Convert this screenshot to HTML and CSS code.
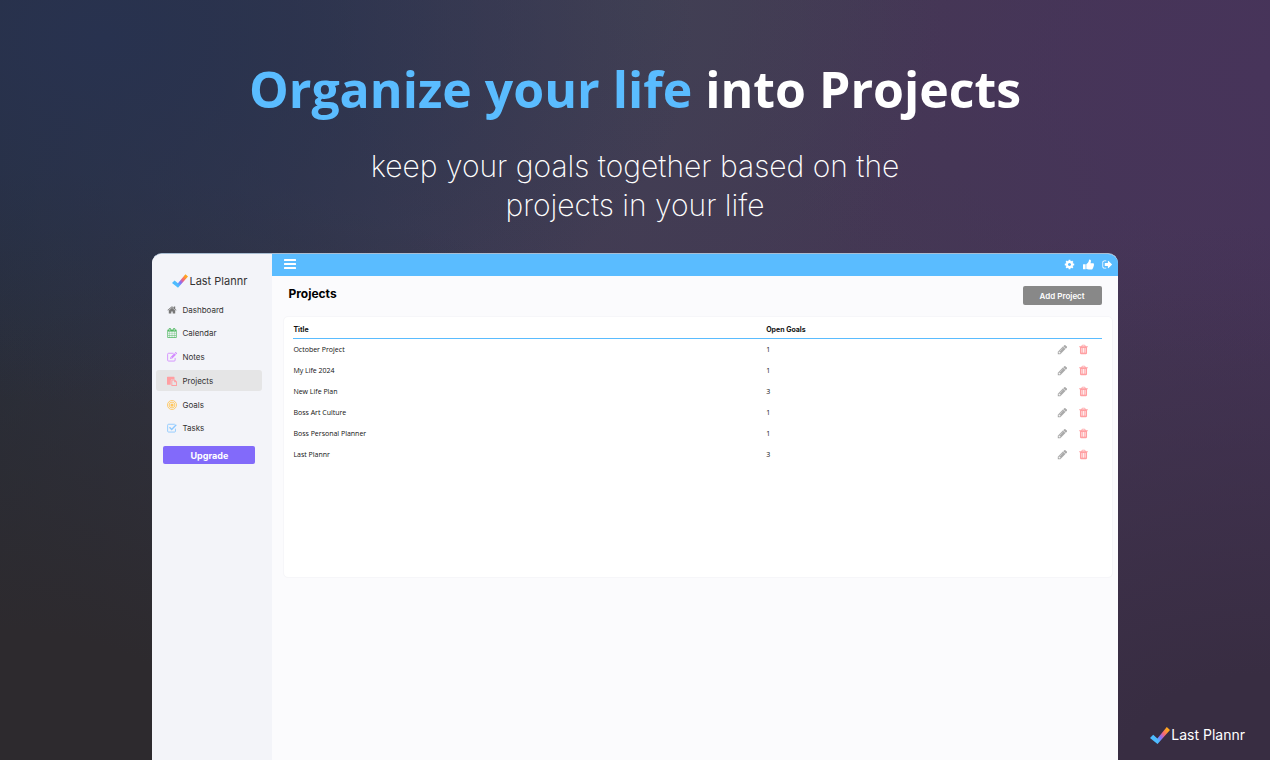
FILE: index.html
```html
<!DOCTYPE html>
<html lang="en">
<head>
    <meta charset="UTF-8">
    <title>Last Plannr</title>
    <link rel="stylesheet" href="styles.css">
</head>
<body>
    <!-- shared icons -->
    <svg class="sprite" aria-hidden="true">
        <defs>
            <linearGradient id="checkFill" gradientUnits="userSpaceOnUse" x1="3" y1="12" x2="18" y2="1">
                <stop offset="0.15" stop-color="#4dbcff"/>
                <stop offset="0.4" stop-color="#8b6cf5"/>
                <stop offset="0.62" stop-color="#f5657c"/>
                <stop offset="0.9" stop-color="#ffa51f"/>
            </linearGradient>
        </defs>
        <symbol id="check" viewBox="0 0 20 17">
            <path d="M0 11l3.200-3.200 4.200 3.600L16.800 0 20 2.900 7.500 17z" fill="url(#checkFill)"/>
        </symbol>
        <symbol id="home" viewBox="0 0 1792 1792">
            <path d="M1472 992v480q0 26-19 45t-45 19h-384v-384h-256v384h-384q-26 0-45-19t-19-45v-480q0-1 .5-3t.5-3l575-474 575 474q1 2 1 6zm223-69l-62 74q-8 9-21 11h-3q-13 0-21-7l-692-577-692 577q-12 8-24 7-13-2-21-11l-62-74q-8-10-7-23.500t11-21.500l719-599q32-26 76-26t76 26l244 204v-195q0-14 9-23t23-9h192q14 0 23 9t9 23v408l219 182q10 8 11 21.500t-7 23.500z"/>
        </symbol>
        <symbol id="calendar" viewBox="0 0 1792 1792">
            <path fill-rule="evenodd" d="M192 1664h288v-288h-288v288zm352 0h320v-288h-320v288zm-352-352h288v-320h-288v320zm352 0h320v-320h-320v320zm-352-384h288v-288h-288v288zm736 736h320v-288h-320v288zm-384-736h320v-288h-320v288zm768 736h288v-288h-288v288zm-384-352h320v-320h-320v320zm-352-864v-288q0-13-9.500-22.500t-22.500-9.500h-64q-13 0-22.500 9.500t-9.500 22.500v288q0 13 9.500 22.500t22.500 9.500h64q13 0 22.500-9.500t9.500-22.500zm736 864h288v-320h-288v320zm-384-384h320v-288h-320v288zm384 0h288v-288h-288v288zm32-480v-288q0-13-9.500-22.500t-22.500-9.500h-64q-13 0-22.500 9.500t-9.500 22.500v288q0 13 9.500 22.500t22.500 9.500h64q13 0 22.500-9.500t9.500-22.500zm384-64v1280q0 52-38 90t-90 38h-1408q-52 0-90-38t-38-90v-1280q0-52 38-90t90-38h128v-96q0-66 47-113t113-47h64q66 0 113 47t47 113v96h384v-96q0-66 47-113t113-47h64q66 0 113 47t47 113v96h128q52 0 90 38t38 90z"/>
        </symbol>
        <symbol id="note" viewBox="0 0 16 16">
            <path d="M10.500 2H2.500A1.500 1.500 0 0 0 1 3.500v9.500A1.500 1.500 0 0 0 2.500 14.500h9a1.500 1.500 0 0 0 1.500-1.500V9.500" fill="none" stroke="currentColor" stroke-width="1.400"/>
            <path fill-rule="evenodd" d="M11.800 1.800l2.600 2.600-6.800 6.800H5V8.600zM6 8.900v1.400h1.300l.7-.7-1.400-1.400zM12.500 1.100l.6-.6a1 1 0 0 1 1.400 0l1.200 1.200a1 1 0 0 1 0 1.400l-.6.6z"/>
        </symbol>
        <symbol id="paste" viewBox="0 0 16 16">
            <path d="M1 1h10a1 1 0 0 1 1 1v3H8a2 2 0 0 0-2 2v7H1a1 1 0 0 1-1-1V2a1 1 0 0 1 1-1z"/>
            <path fill-rule="evenodd" d="M8 5.500h4.500L16 9v6a1 1 0 0 1-1 1H8a1 1 0 0 1-1-1V6.500a1 1 0 0 1 1-1zm.5 1.500v7.500h6V10h-3V7z"/>
        </symbol>
        <symbol id="target" viewBox="0 0 16 16">
            <g fill="none" stroke="currentColor" stroke-width="1.400">
                <circle cx="8" cy="8" r="7.200"/>
                <circle cx="8" cy="8" r="4.600"/>
            </g>
            <circle cx="8" cy="8" r="2.600"/>
        </symbol>
        <symbol id="task" viewBox="0 0 16 16">
            <path d="M12.500 2H2.500A1.500 1.500 0 0 0 1 3.500v9.500A1.500 1.500 0 0 0 2.500 14.500h9.500a1.500 1.500 0 0 0 1.500-1.500V9" fill="none" stroke="currentColor" stroke-width="1.400"/>
            <path d="M3.200 7.500l1.600-1.600 2.700 2.700L14 2.100l1.600 1.600-8.100 8.100z"/>
        </symbol>
        <symbol id="bars" viewBox="0 0 12 10">
            <rect width="12" height="2" rx="0.500"/>
            <rect y="4" width="12" height="2" rx="0.500"/>
            <rect y="8" width="12" height="2" rx="0.500"/>
        </symbol>
        <symbol id="cog" viewBox="0 0 1792 1792">
            <path d="M1152 896q0-106-75-181t-181-75-181 75-75 181 75 181 181 75 181-75 75-181zm512-109v222q0 12-8 23t-20 13l-185 28q-19 54-39 91 35 50 107 138 10 12 10 25t-9 23q-27 37-99 108t-94 71q-12 0-26-9l-138-108q-44 23-91 38-16 136-29 186-7 28-36 28h-222q-14 0-24.500-8.500t-11.500-21.500l-28-184q-49-16-90-37l-141 107q-10 9-25 9-14 0-25-11-126-114-165-168-7-10-7-23 0-12 8-23 15-21 51-66.500t54-70.500q-27-50-41-99l-183-27q-13-2-21-12.500t-8-23.500v-222q0-12 8-23t19-13l186-28q14-46 39-92-40-57-107-138-10-12-10-24 0-10 9-23 26-36 98.500-107.500t94.500-71.500q13 0 26 10l138 107q44-23 91-38 16-136 29-186 7-28 36-28h222q14 0 24.500 8.500t11.500 21.500l28 184q49 16 90 37l142-107q9-9 24-9 13 0 25 10 129 119 165 170 7 8 7 22 0 12-8 23-15 21-51 66.500t-54 70.500q26 50 41 98l183 28q13 2 21 12.500t8 23.500z"/>
        </symbol>
        <symbol id="thumb" viewBox="0 0 16 16">
            <path d="M.5 7.500h3.300V15H.5a.5.5 0 0 1-.5-.5V8a.5.5 0 0 1 .5-.5zM4.800 7.500C6.500 6.800 7.500 5 8.200 3.800 8.600 3 8.400.8 9.500.6c1.800-.2 2.400 1.600 2 3.200L11 6h3.500c1.800 0 2 1.800 1 2.600.7.900.4 1.900-.4 2.400.4 1-.1 1.800-.8 2.100.2 1.500-.8 2.300-2.300 2.300-3 0-4.200-.2-7.200-1z"/>
        </symbol>
        <symbol id="signout" viewBox="0 0 1792 1792">
            <path d="M704 1440q0 4 1 20t.5 26.500-3 23.500-10 19.500-20.500 6.500h-320q-119 0-203.500-84.500t-84.500-203.500v-704q0-119 84.500-203.500t203.500-84.500h320q13 0 22.500 9.500t9.500 22.500q0 4 1 20t.5 26.500-3 23.500-10 19.500-20.500 6.500h-320q-66 0-113 47t-47 113v704q0 66 47 113t113 47h312l11.500 1 11.500 3 8 5.500 7 9 2 13.500zm928-544q0 26-19 45l-544 544q-19 19-45 19t-45-19-19-45v-288h-448q-26 0-45-19t-19-45v-384q0-26 19-45t45-19h448v-288q0-26 19-45t45-19 45 19l544 544q19 19 19 45z"/>
        </symbol>
        <symbol id="pencil" viewBox="0 0 1792 1792">
            <path d="M491 1536l91-91-235-235-91 91v107h128v128h107zm523-928q0-22-22-22-10 0-17 7l-542 542q-7 7-7 17 0 22 22 22 10 0 17-7l542-542q7-7 7-17zm-54-192l416 416-832 832h-416v-416zm683 96q0 53-37 90l-166 166-416-416 166-165q36-38 90-38 53 0 91 38l235 234q37 39 37 91z"/>
        </symbol>
        <symbol id="trash" viewBox="0 0 1792 1792">
            <path fill-rule="evenodd" d="M704 1376v-704q0-14-9-23t-23-9h-64q-14 0-23 9t-9 23v704q0 14 9 23t23 9h64q14 0 23-9t9-23zm256 0v-704q0-14-9-23t-23-9h-64q-14 0-23 9t-9 23v704q0 14 9 23t23 9h64q14 0 23-9t9-23zm256 0v-704q0-14-9-23t-23-9h-64q-14 0-23 9t-9 23v704q0 14 9 23t23 9h64q14 0 23-9t9-23zm-544-992h448l-48-117q-7-9-17-11h-317q-10 2-17 11zm928 32v64q0 14-9 23t-23 9h-96v948q0 83-47 143.500t-113 60.500h-832q-66 0-113-58.500t-47-141.500v-952h-96q-14 0-23-9t-9-23v-64q0-14 9-23t23-9h309l70-167q15-37 54-63t79-26h320q40 0 79 26t54 63l70 167h309q14 0 23 9t9 23z"/>
        </symbol>
    </svg>

    <header class="hero">
        <h1><span>Organize your life</span> into Projects</h1>
        <p>keep your goals together based on the<br>projects in your life</p>
    </header>

    <div class="app">
        <!-- sidebar -->
        <aside class="sidebar">
            <div class="logo"><svg><use href="#check"/></svg>Last Plannr</div>
            <nav class="menu">
                <a href="#" class="home"><svg><use href="#home"/></svg>Dashboard</a>
                <a href="#" class="calendar"><svg><use href="#calendar"/></svg>Calendar</a>
                <a href="#" class="notes"><svg><use href="#note"/></svg>Notes</a>
                <a href="#" class="projects active"><svg><use href="#paste"/></svg>Projects</a>
                <a href="#" class="goals"><svg><use href="#target"/></svg>Goals</a>
                <a href="#" class="tasks"><svg><use href="#task"/></svg>Tasks</a>
            </nav>
            <button class="upgrade">Upgrade</button>
        </aside>

        <div class="content">
            <!-- top bar -->
            <div class="topbar">
                <button class="icon-btn toggle" aria-label="Menu"><svg><use href="#bars"/></svg></button>
                <button class="icon-btn" aria-label="Settings"><svg><use href="#cog"/></svg></button>
                <button class="icon-btn" aria-label="Feedback"><svg><use href="#thumb"/></svg></button>
                <button class="icon-btn" aria-label="Sign out"><svg><use href="#signout"/></svg></button>
            </div>

            <div class="page-head">
                <h2>Projects</h2>
                <button class="add">Add Project</button>
            </div>

            <div class="card">
                <table>
                    <thead>
                        <tr><th class="title">Title</th><th>Open Goals</th><th class="actions"></th></tr>
                    </thead>
                    <!-- rows are filled in by the script -->
                    <tbody id="projectRows"></tbody>
                </table>
            </div>
        </div>
    </div>

    <div class="logo watermark"><svg><use href="#check"/></svg>Last Plannr</div>

    <script>
        const projects = [
            ['October Project', 1],
            ['My Life 2024', 1],
            ['New Life Plan', 3],
            ['Boss Art Culture', 1],
            ['Boss Personal Planner', 1],
            ['Last Plannr', 3]
        ];

        document.getElementById('projectRows').innerHTML = projects.map(([title, goals]) => `
            <tr>
                <td>${title}</td>
                <td>${goals}</td>
                <td class="actions">
                    <div>
                        <button class="icon-btn edit" aria-label="Edit"><svg><use href="#pencil"/></svg></button>
                        <button class="icon-btn delete" aria-label="Delete"><svg><use href="#trash"/></svg></button>
                    </div>
                </td>
            </tr>`).join('');
    </script>
</body>
</html>
```
FILE: styles.css
```css
* {
    margin: 0;
    padding: 0;
    box-sizing: border-box;
}

body {
    min-height: 100vh;
    display: flex;
    flex-direction: column;
    align-items: center;
    font-family: Inter, sans-serif;
    background:
        radial-gradient(ellipse at 8% 5%, #28324f 0%, rgba(40, 50, 79, 0) 36%),
        radial-gradient(ellipse at 50% 0%, #414054 0%, rgba(65, 64, 84, 0) 34%),
        radial-gradient(ellipse at 0% 100%, #2d2a2e 12%, rgba(45, 42, 46, 0) 55%),
        radial-gradient(ellipse at 100% 10%, #47345a 0%, rgba(71, 52, 90, 0) 30%),
        radial-gradient(ellipse at 100% 100%, #382d42 8%, rgba(56, 45, 66, 0) 50%),
        linear-gradient(90deg, #28303f 0%, #3a3a50 30%, #433a53 50%, #443754 75%, #463458 100%);
}

svg {
    display: block;
    fill: currentColor;
}
.sprite {
    position: absolute;
    width: 0;
    height: 0;
}
button {
    border: none;
    font-family: inherit;
    cursor: pointer;
}

/* headline */
.hero {
    padding: 53px 16px 28px;
    text-align: center;
    color: #fff;
}
.hero h1 {
    font-family: "Open Sans", sans-serif;
    font-size: 50px;
    line-height: 72px;
    font-weight: 700;
}
.hero h1 span {
    color: #5abcff;
}
.hero p {
    margin-top: 22px;
    font-size: 30px;
    line-height: 39px;
    font-weight: 200;
}

/* app window */
.app {
    width: 76%;
    flex: 1;
    display: flex;
    overflow: hidden;
    border-top: 1px solid #a9bdd2;
    border-radius: 10px 10px 0 0;
    background: #fbfbfd;
}
.sidebar {
    width: 120px;
    background: #f3f4f9;
}
.logo {
    display: flex;
    align-items: center;
    font-size: 11px;
    line-height: 16px;
    color: #333;
}
.logo svg {
    width: 16px;
    height: 14px;
    margin-right: 1px;
}
.sidebar .logo {
    padding: 19px 0 0 20px;
}
.menu {
    height: 150px;
    padding: 10px 10px 0 4px;
    display: flex;
    flex-direction: column;
    justify-content: space-between;
}
.menu a {
    display: flex;
    align-items: center;
    gap: 5px;
    height: 21px;
    padding-left: 11px;
    border-radius: 3px;
    font-size: 8px;
    color: #333;
    text-decoration: none;
}
.menu a.active {
    background: #e5e5e6;
}
.menu svg {
    width: 10px;
    height: 10px;
}
.home svg { color: #777; }
.calendar svg { color: #4fb860; }
.notes svg { color: #d38cff; }
.projects svg { color: #ff9fa2; }
.goals svg { color: #ffc65c; }
.tasks svg { color: #8cc8ff; }
.upgrade {
    display: block;
    width: 92px;
    height: 18px;
    margin: 7px 0 0 11px;
    border-radius: 2px;
    background: #826afa;
    color: #fff;
    font-size: 9px;
    font-weight: 700;
}

/* right side */
.content {
    flex: 1;
}
.topbar {
    height: 22px;
    padding: 0 5px 2px 12px;
    display: flex;
    align-items: center;
    gap: 8px;
    background: #5abcff;
    color: #fff;
}
.icon-btn {
    background: none;
    color: inherit;
}
.icon-btn svg {
    width: 11px;
    height: 11px;
}
.toggle {
    margin-right: auto;
}
.toggle svg {
    width: 12px;
    height: 10px;
}
.page-head {
    display: flex;
    justify-content: space-between;
    padding: 10px 16px 11px;
}
.page-head h2 {
    font-size: 12px;
    line-height: 15px;
    font-weight: 700;
    color: #000;
}
.add {
    width: 79px;
    height: 19px;
    border-radius: 2px;
    background: #888;
    color: #fff;
    font-size: 8px;
    font-weight: 600;
}

/* project list */
.card {
    min-height: 262px;
    margin: 0 5px 0 11px;
    padding: 3px 10px 8px 9px;
    border: 1px solid #f6f6f9;
    border-radius: 5px;
    background: #fff;
}
table {
    width: 100%;
    table-layout: fixed;
    border-collapse: separate;
    border-spacing: 0;
    font-family: "Open Sans", sans-serif;
    font-size: 7px;
    text-align: left;
    color: #111;
}
th {
    height: 19px;
    border-bottom: 1px solid #5abcff;
    font-family: Inter, sans-serif;
    font-weight: 700;
}
td {
    height: 21px;
}
.title {
    width: 58.5%;
}
.actions div {
    display: flex;
    justify-content: flex-end;
    gap: 10px;
    padding-right: 13px;
}
.edit { color: #aaa; }
.delete { color: #ff9fa2; }

/* brand in the corner */
.watermark {
    position: absolute;
    right: 25px;
    bottom: 15px;
    font-size: 14px;
    line-height: 20px;
    color: #fff;
}
.watermark svg {
    width: 20px;
    height: 17px;
}
```
